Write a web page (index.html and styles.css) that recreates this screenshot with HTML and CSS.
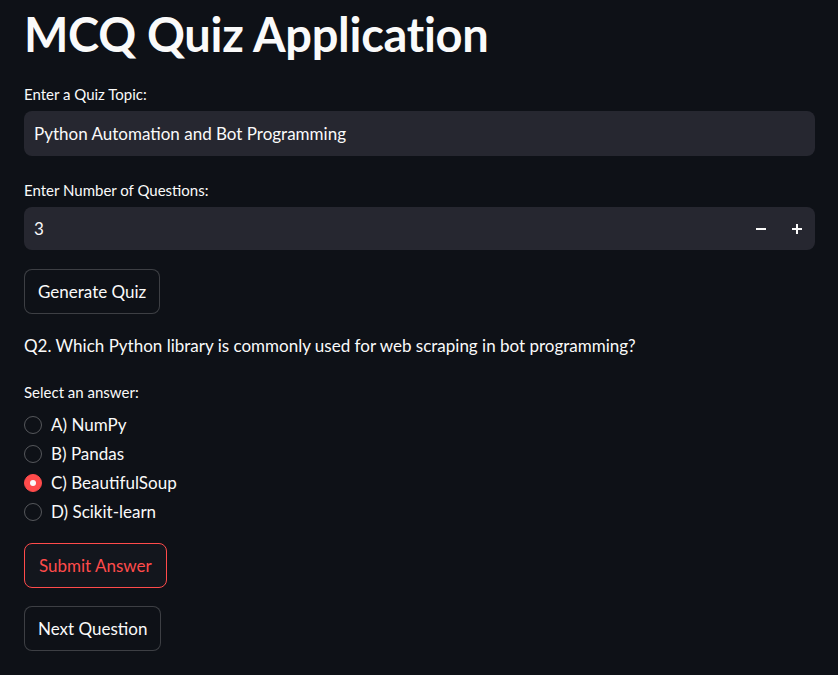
FILE: index.html
```html
<!DOCTYPE html>
<html>
<head>
<meta charset="utf-8">
<link rel="stylesheet" href="styles.css">
</head>
<body>
<main class="app">
  <h1 class="title">MCQ Quiz Application</h1>

  <label class="label">Enter a Quiz Topic:</label>
  <div class="input">Python Automation and Bot Programming</div>

  <label class="label label-num">Enter Number of Questions:</label>
  <div class="input number">
    <span class="num-value">3</span>
    <span class="steppers">
      <span class="step"><svg width="12" height="12" viewBox="0 0 12 12"><rect x="1" y="5" width="10" height="2" fill="#fafafa"/></svg></span>
      <span class="step"><svg width="12" height="12" viewBox="0 0 12 12"><rect x="1" y="5" width="10" height="2" fill="#fafafa"/><rect x="5" y="1" width="2" height="10" fill="#fafafa"/></svg></span>
    </span>
  </div>

  <div class="btn-row"><button class="btn">Generate Quiz</button></div>

  <p class="question">Q2. Which Python library is commonly used for web scraping in bot programming?</p>

  <div class="radio-group">
    <div class="label">Select an answer:</div>
    <div class="options">
      <div class="option"><span class="radio"></span><span>A) NumPy</span></div>
      <div class="option"><span class="radio"></span><span>B) Pandas</span></div>
      <div class="option"><span class="radio checked"></span><span>C) BeautifulSoup</span></div>
      <div class="option"><span class="radio"></span><span>D) Scikit-learn</span></div>
    </div>
  </div>

  <div class="btn-row submit-row"><button class="btn btn-danger">Submit Answer</button></div>
  <div class="btn-row next-row"><button class="btn">Next Question</button></div>
</main>
</body>
</html>
```

FILE: styles.css
```css
html, body {
  margin: 0;
  padding: 0;
  background: #0e1117;
  color: #fafafa;
  font-family: "Source Sans Pro", Lato, "Noto Sans", sans-serif;
}

.app {
  padding: 0 23px 0 24px;
  display: flex;
  flex-direction: column;
}

.title {
  margin: 0;
  padding-top: 6px;
  font-size: 47px;
  font-weight: 700;
  line-height: 56px;
  letter-spacing: -0.3px;
  height: 78px;
}

.label {
  display: block;
  font-size: 15px;
  line-height: 20px;
  color: #fafafa;
}

.input {
  margin-top: 7px;
  height: 45px;
  box-sizing: border-box;
  background: #262730;
  border-radius: 8px;
  padding: 0 10px;
  display: flex;
  align-items: center;
  font-size: 17px;
}

.label-num {
  margin-top: 24px;
}

.number {
  height: 43px;
  justify-content: space-between;
  padding-right: 0;
}

.steppers {
  display: flex;
  align-items: center;
}

.step {
  width: 36px;
  height: 32px;
  display: flex;
  align-items: center;
  justify-content: center;
}

.btn-row {
  margin-top: 19px;
  display: flex;
}

.btn {
  font-family: inherit;
  font-size: 17px;
  color: #fafafa;
  background: #0e1117;
  border: 1px solid rgba(250, 250, 250, 0.2);
  border-radius: 8px;
  height: 45px;
  padding: 0 13px;
  cursor: pointer;
}

.btn-danger {
  color: #ff4b4b;
  border-color: #ff4b4b;
  background: #13161d;
  padding: 0 14px;
}

.question {
  margin: 20px 0 0;
  font-size: 17px;
  line-height: 24px;
}

.radio-group {
  margin-top: 24px;
}

.options {
  margin-top: 8px;
  display: flex;
  flex-direction: column;
}

.option {
  display: flex;
  align-items: center;
  height: 29px;
  gap: 9px;
  font-size: 17px;
}

.radio {
  width: 18px;
  height: 18px;
  box-sizing: border-box;
  border: 1px solid rgba(250, 250, 250, 0.3);
  border-radius: 50%;
  flex: none;
  position: relative;
}

.radio.checked {
  background: #ff4b4b;
  border-color: #ff4b4b;
}

.radio.checked::after {
  content: "";
  position: absolute;
  left: 5px;
  top: 5px;
  width: 6px;
  height: 6px;
  border-radius: 50%;
  background: #fafafa;
}

.submit-row {
  margin-top: 17px;
}

.next-row {
  margin-top: 18px;
}
```
